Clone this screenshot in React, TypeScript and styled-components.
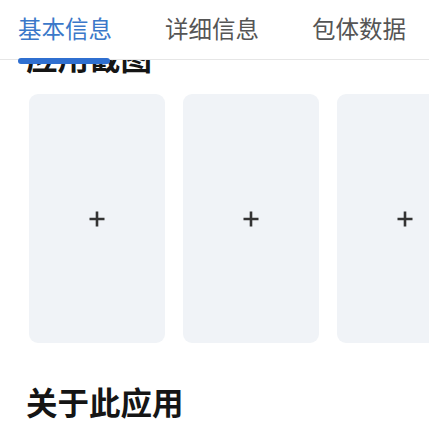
import React from 'react';
import styled, { createGlobalStyle } from 'styled-components';

const GlobalStyle = createGlobalStyle`
  html, body {
    margin: 0;
    padding: 0;
    background: #fff;
  }
  body {
    font-family: "Noto Sans CJK SC", "Noto Sans", sans-serif;
    overflow: hidden;
  }
`;

const Page = styled.div`
  width: 429px;
  height: 425px;
  display: flex;
  flex-direction: column;
  overflow: hidden;
  background: #fff;
`;

const TabBar = styled.div`
  position: relative;
  z-index: 2;
  height: 60px;
  flex-shrink: 0;
  display: flex;
  align-items: flex-start;
  gap: 53px;
  padding: 16px 0 0 18px;
  box-sizing: border-box;
  background: #fff;
  border-bottom: 1px solid #e6e6e6;
`;

const Tab = styled.div<{ $active?: boolean }>`
  position: relative;
  height: 44px;
  font-size: 23.5px;
  line-height: 24px;
  white-space: nowrap;
  color: ${(p) => (p.$active ? '#3b78c9' : '#555')};
`;

// 选中下划线，压在分割线上
const Indicator = styled.div`
  position: absolute;
  left: 0;
  right: 2px;
  bottom: -4px;
  height: 6px;
  border-radius: 3px;
  background: #2f6fd0;
`;

const Viewport = styled.div`
  flex: 1;
  overflow: hidden;
`;

const Content = styled.div`
  margin-top: -20px;
`;

const SectionTitle = styled.div<{ $gap?: number }>`
  font-size: 31.5px;
  line-height: 32px;
  font-weight: 700;
  color: #151515;
  padding-left: 26px;
  margin-top: ${(p) => (p.$gap || 0) + 'px'};
`;

const Shots = styled.div`
  display: flex;
  gap: 18px;
  padding-left: 29px;
  margin-top: 22px;
`;

const Shot = styled.div`
  flex-shrink: 0;
  width: 136px;
  height: 249px;
  border-radius: 9px;
  background: #f0f3f7;
  display: flex;
  align-items: center;
  justify-content: center;
`;

const Plus = () => (
  <svg width="18" height="18" viewBox="0 0 18 18">
    <path d="M9 1.5v15M1.5 9h15" stroke="#333" strokeWidth="2.6" fill="none" />
  </svg>
);

export default function App() {
  const tabs = ['基本信息', '详细信息', '包体数据'];
  return (
    <Page>
      <GlobalStyle />
      <TabBar>
        {tabs.map((t, i) => (
          <Tab key={t} $active={i === 0}>
            {t}
            {i === 0 && <Indicator />}
          </Tab>
        ))}
      </TabBar>
      <Viewport>
        <Content>
          <SectionTitle>应用截图</SectionTitle>
          <Shots>
            {[0, 1, 2].map((i) => (
              <Shot key={i}>
                <Plus />
              </Shot>
            ))}
          </Shots>
          <SectionTitle $gap={42}>关于此应用</SectionTitle>
        </Content>
      </Viewport>
    </Page>
  );
}
